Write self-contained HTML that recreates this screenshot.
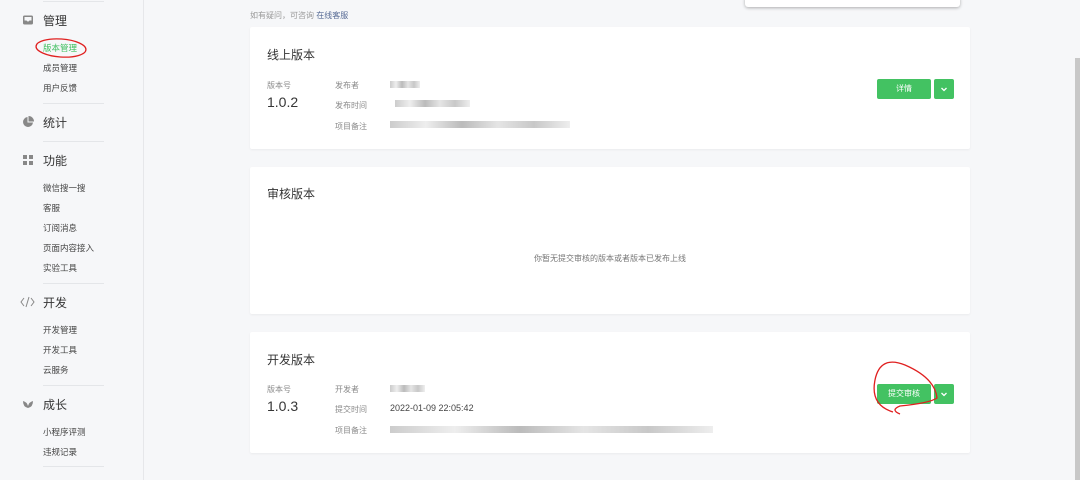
<!DOCTYPE html>
<html><head><meta charset="utf-8"><style>
*{margin:0;padding:0;box-sizing:border-box}
body{width:1080px;height:480px;overflow:hidden;background:#f6f7f9;font-family:"Liberation Sans","Noto Sans CJK SC",sans-serif;position:relative;color:#353535}
.a{position:absolute;white-space:nowrap}
.side{position:absolute;left:0;top:0;width:144px;height:480px;background:#f6f7f9;border-right:1px solid #e6e7ea}
.h{font-size:12px;color:#353535}
.s{font-size:8.5px;color:#444}
.d{position:absolute;left:43px;width:61px;height:1px;background:#e4e6e9}
.card{position:absolute;left:250px;width:720px;background:#fff;border-radius:2px;box-shadow:0 1px 2px rgba(0,0,0,.05)}
.t{font-size:12px;color:#353535}
.l{font-size:8px;color:#8a8a8a}
.v{font-size:14px;color:#353535}
.btn{position:absolute;background:#43c262;color:#fff;font-size:8px;text-align:center;border-radius:2px}
.blur{position:absolute;height:7px;background:linear-gradient(90deg,#ccc,#eee 20%,#bbb 40%,#e5e5e5 60%,#c8c8c8 80%,#eee)}
</style></head><body>
<div class="side">
<div class="d" style="top:1px"></div>
<svg class="a" style="left:22px;top:14px" width="12" height="12" viewBox="0 0 12 12"><rect x="1" y="1.5" width="10" height="9" rx="1.5" fill="#888"/><path d="M2.5 3H9.5V6.5H7.5L6.5 7.5H5.5L4.5 6.5H2.5Z" fill="#f6f7f9"/></svg>
<div class="a h" style="left:43px;top:12px">管理</div>
<div class="a s" style="left:43px;top:42px;color:#3fbf5e">版本管理</div>
<div class="a s" style="left:43px;top:62px">成员管理</div>
<div class="a s" style="left:43px;top:82px">用户反馈</div>
<div class="d" style="top:103px"></div>
<svg class="a" style="left:22px;top:116px" width="12" height="12" viewBox="0 0 12 12"><path d="M5.5 1A5 5 0 1 0 11 6.5H5.5Z" fill="#888"/><path d="M6.5 0V5.5H12A5.5 5.5 0 0 0 6.5 0Z" fill="#888"/></svg>
<div class="a h" style="left:43px;top:114px">统计</div>
<div class="d" style="top:141px"></div>
<svg class="a" style="left:22px;top:154px" width="12" height="12" viewBox="0 0 12 12"><rect x="1" y="1" width="4" height="4" fill="#888"/><rect x="7" y="1" width="4" height="4" fill="#888"/><rect x="1" y="7" width="4" height="4" fill="#888"/><rect x="7" y="7" width="4" height="4" fill="#888"/></svg>
<div class="a h" style="left:43px;top:152px">功能</div>
<div class="a s" style="left:43px;top:182px">微信搜一搜</div>
<div class="a s" style="left:43px;top:202px">客服</div>
<div class="a s" style="left:43px;top:222px">订阅消息</div>
<div class="a s" style="left:43px;top:242px">页面内容接入</div>
<div class="a s" style="left:43px;top:262px">实验工具</div>
<div class="d" style="top:283px"></div>
<svg class="a" style="left:20px;top:296px" width="15" height="12" viewBox="0 0 15 12"><path d="M4 2L1 6L4 10M11 2L14 6L11 10M9 1L6 11" stroke="#888" fill="none" stroke-width="1"/></svg>
<div class="a h" style="left:43px;top:294px">开发</div>
<div class="a s" style="left:43px;top:324px">开发管理</div>
<div class="a s" style="left:43px;top:344px">开发工具</div>
<div class="a s" style="left:43px;top:364px">云服务</div>
<div class="d" style="top:385px"></div>
<svg class="a" style="left:22px;top:398px" width="12" height="12" viewBox="0 0 12 12"><path d="M1 3Q1 9 6 10Q11 9 11 3Q7 4 6 8Q5 4 1 3Z" fill="#888"/></svg>
<div class="a h" style="left:43px;top:396px">成长</div>
<div class="a s" style="left:43px;top:426px">小程序评测</div>
<div class="a s" style="left:43px;top:446px">违规记录</div>
<div class="d" style="top:466px"></div>
</div>
<div class="a" style="left:745px;top:-4px;width:215px;height:11px;background:#fff;border-radius:3px;box-shadow:0 1px 3px rgba(0,0,0,.3)"></div>
<div class="a" style="left:250px;top:10px;font-size:8px;color:#999">如有疑问，可咨询 <span style="color:#576b95">在线客服</span></div>

<div class="card" style="top:27px;height:122px">
<div class="a t" style="left:17px;top:19px">线上版本</div>
<div class="a l" style="left:17px;top:53px">版本号</div>
<div class="a v" style="left:17px;top:67px">1.0.2</div>
<div class="a l" style="left:85px;top:53px">发布者</div>
<div class="a l" style="left:85px;top:73px">发布时间</div>
<div class="a l" style="left:85px;top:94px">项目备注</div>
<div class="blur" style="left:140px;top:54px;width:30px"></div>
<div class="blur" style="left:145px;top:73px;width:75px"></div>
<div class="blur" style="left:140px;top:94px;width:180px"></div>
<div class="btn" style="left:627px;top:52px;width:54px;height:20px;line-height:20px">详情</div>
<div class="btn" style="left:684px;top:52px;width:20px;height:20px"><svg width="20" height="20" viewBox="0 0 20 20"><path d="M7.5 9L10 11.5L12.5 9" stroke="#fff" stroke-width="1.3" fill="none"/></svg></div>
</div>

<div class="card" style="top:167px;height:147px">
<div class="a t" style="left:17px;top:18px">审核版本</div>
<div class="a" style="left:0;width:720px;top:86px;text-align:center;font-size:8px;color:#777">你暂无提交审核的版本或者版本已发布上线</div>
</div>

<div class="card" style="top:332px;height:121px">
<div class="a t" style="left:17px;top:19px">开发版本</div>
<div class="a l" style="left:17px;top:52px">版本号</div>
<div class="a v" style="left:17px;top:66px">1.0.3</div>
<div class="a l" style="left:85px;top:52px">开发者</div>
<div class="a l" style="left:85px;top:72px">提交时间</div>
<div class="a l" style="left:85px;top:93px">项目备注</div>
<div class="blur" style="left:140px;top:53px;width:35px"></div>
<div class="a" style="left:140px;top:71px;font-size:9px;color:#444">2022-01-09 22:05:42</div>
<div class="blur" style="left:140px;top:94px;width:323px"></div>
<div class="btn" style="left:627px;top:52px;width:54px;height:20px;line-height:20px">提交审核</div>
<div class="btn" style="left:684px;top:52px;width:20px;height:20px"><svg width="20" height="20" viewBox="0 0 20 20"><path d="M7.5 9L10 11.5L12.5 9" stroke="#fff" stroke-width="1.3" fill="none"/></svg></div>
</div>

<div class="a" style="left:1075px;top:58px;width:5px;height:422px;background:#c8c8c8"></div>
<svg class="a" style="left:0;top:0" width="1080" height="480">
<ellipse cx="61" cy="48" rx="25" ry="9" fill="none" stroke="#e02020" stroke-width="1.3" transform="rotate(4 61 48)"/>
<path d="M893 412Q870 405 875 380Q880 355 905 365Q935 378 937 398Q930 403 900 406Q890 410 900 414" fill="none" stroke="#e02020" stroke-width="1.3"/>
</svg>
</body></html>
